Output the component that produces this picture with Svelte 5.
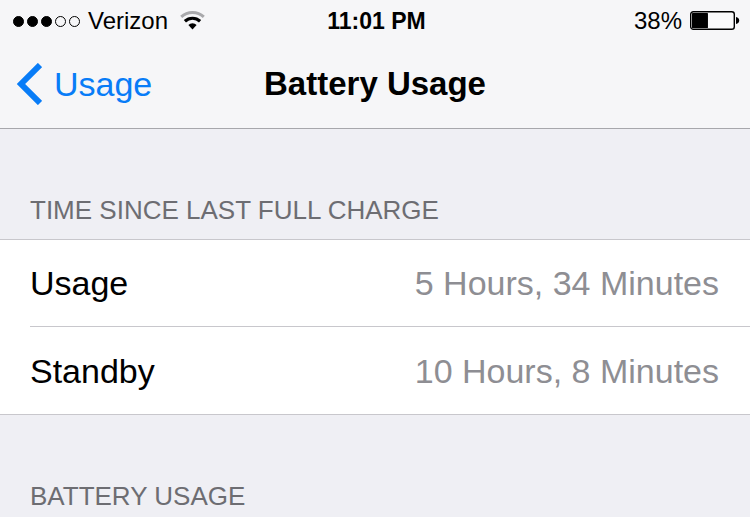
<script>
	const carrier = 'Verizon';
	const signal = 3;
	const time = '11:01 PM';
	const battery = 38;

	const rows = [
		{ label: 'Usage', value: '5 Hours, 34 Minutes' },
		{ label: 'Standby', value: '10 Hours, 8 Minutes' }
	];
</script>

<div class="screen">
	<header>
		<div class="status-bar">
			<div class="status-left">
				<div class="signal" role="img" aria-label="Signal strength">
					{#each [1, 2, 3, 4, 5] as dot}
						<span class="dot" class:filled={dot <= signal}></span>
					{/each}
				</div>
				<span>{carrier}</span>
				<svg class="wifi" width="26" height="20" viewBox="0 0 26 20" aria-hidden="true">
					<path d="M1.2 5.9 A17 17 0 0 1 23.8 5.9" fill="none" stroke="#a9a9ac" stroke-width="3" />
					<path d="M4.9 10.2 A11.2 11.2 0 0 1 20.1 10.2" fill="none" stroke="#000" stroke-width="3.2" />
					<path d="M8.4 14 A5.8 5.8 0 0 1 16.6 14 L12.5 18.4 Z" fill="#000" />
				</svg>
			</div>

			<span class="time">{time}</span>

			<div class="status-right">
				<span>{battery}%</span>
				<svg class="battery" width="50" height="20" viewBox="0 0 50 20" aria-hidden="true">
					<rect x="0.7" y="0.7" width="43.6" height="17.6" rx="2.6" fill="#fafafb" stroke="#000" stroke-width="1.4" />
					<rect x="2" y="2" width={(42 * battery) / 100} height="15" rx="0.6" fill="#000" />
					<path d="M46 6 Q49.2 6.6 49.2 9.5 T46 13 Z" fill="#000" />
				</svg>
			</div>
		</div>

		<nav class="nav-bar">
			<button class="back" type="button">
				<svg width="26" height="42" viewBox="0 0 26 42" aria-hidden="true">
					<path d="M24 2 L5 21 L24 40" fill="none" stroke="currentColor" stroke-width="6" />
				</svg>
				Usage
			</button>
			<h1>Battery Usage</h1>
		</nav>
	</header>

	<main>
		<section>
			<h2>Time since last full charge</h2>
			<dl>
				{#each rows as row}
					<div class="row">
						<dt>{row.label}</dt>
						<dd>{row.value}</dd>
					</div>
				{/each}
			</dl>
		</section>

		<section>
			<h2>Battery usage</h2>
		</section>
	</main>
</div>

<style>
	:global(body) {
		margin: 0;
		background: #efeff4;
	}

	.screen {
		font-family: "Liberation Sans", Arial, sans-serif;
		font-size: 34px;
		line-height: 40px;
		color: #000;
		min-height: 100vh;
		overflow: hidden;
		background: #efeff4;
	}

	header {
		background: #f6f6f8;
		border-bottom: 1px solid #a7a7ac;
	}

	.status-bar,
	.nav-bar {
		display: grid;
		grid-template-columns: 1fr auto 1fr;
		align-items: center;
	}

	.status-bar {
		box-sizing: border-box;
		height: 40px;
		padding: 2px 10px 0 13px;
		font-size: 24px;
		line-height: 38px;
	}

	.status-left,
	.status-right {
		display: flex;
		align-items: center;
	}

	.status-right {
		justify-content: flex-end;
		gap: 8px;
	}

	.signal {
		display: flex;
		gap: 3px;
		margin-right: 8px;
	}

	.dot {
		box-sizing: border-box;
		width: 11px;
		height: 11px;
		border: 1px solid #000;
		border-radius: 50%;
	}

	.dot.filled {
		background: #000;
	}

	.wifi {
		margin-left: 12px;
	}

	.time {
		font-size: 23px;
		font-weight: bold;
	}

	.nav-bar {
		height: 88px;
		padding: 0 16px;
	}

	.back {
		display: flex;
		align-items: center;
		justify-self: start;
		gap: 12px;
		padding: 0;
		border: none;
		background: none;
		color: #087cf7;
		font: inherit;
		cursor: pointer;
	}

	h1 {
		margin: 0;
		font-size: 33px;
		font-weight: bold;
	}

	h2 {
		margin: 0;
		padding: 66px 30px 14px;
		color: #6d6d72;
		font-size: 26px;
		font-weight: normal;
		line-height: 30px;
		text-transform: uppercase;
	}

	dl {
		margin: 0;
		padding-left: 30px;
		background: #fff;
		border-top: 1px solid #c8c7cc;
		border-bottom: 1px solid #c8c7cc;
	}

	.row {
		display: flex;
		align-items: center;
		justify-content: space-between;
		min-height: 86px;
		padding-right: 31px;
	}

	.row + .row {
		min-height: 87px;
		border-top: 1px solid #c8c7cc;
	}

	dd {
		margin: 0;
		color: #8e8e93;
	}
</style>
